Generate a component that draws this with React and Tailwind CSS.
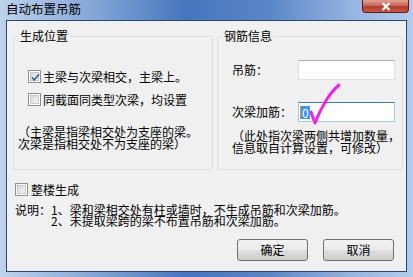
import React from 'react'

const CheckBox = ({ checked }) => (
  <div className="w-[13px] h-[13px] shrink-0 border border-[#8e8f8f] bg-white p-[1px]">
    <div className="relative w-full h-full border border-[#c9c9c9] bg-[linear-gradient(135deg,#d7d7d7,#f7f7f7)]">
      {checked && (
        <svg className="absolute left-[-1px] top-[-1px]" width="11" height="11" viewBox="0 0 11 11">
          <path d="M2 5.5 L4.3 8 L9 2.2" fill="none" stroke="#3f5c9f" strokeWidth="1.7" />
        </svg>
      )}
    </div>
  </div>
)

const WinButton = ({ children }) => (
  <div className="w-[71px] h-[22px] rounded-[3px] border border-[#707070] bg-[linear-gradient(180deg,#f2f2f2_0%,#ebebeb_48%,#dddddd_52%,#cfcfcf_100%)] flex items-center justify-center text-[12px] leading-[14px] text-black">
    {children}
  </div>
)

export default function App() {
  return (
    <div className="relative w-[413px] h-[277px] overflow-hidden bg-[linear-gradient(90deg,#bed3ec_0%,#7ea2d6_25%,#4576bd_45%,#5a86c6_65%,#95b4e0_85%,#b3cbec_100%)] font-['Noto_Sans_CJK_SC',sans-serif] text-black">
      {/* title bar */}
      <div className="flex items-start justify-between h-[20px]">
        <span className="ml-[6px] mt-[2px] text-[12.5px] leading-[14px]">自动布置吊筋</span>
        <div className="shrink-0 mr-[4px] w-[47px] h-[13px] rounded-b-[4px] border border-t-0 border-[#5e1c1c] bg-[linear-gradient(180deg,#e0a193_0%,#c96a5a_45%,#b23a2c_55%,#c45a48_100%)] flex items-center justify-center">
          <svg width="10" height="9" viewBox="0 0 10 9">
            <path d="M1.5 1 L8.5 8 M8.5 1 L1.5 8" stroke="#ffffff" strokeWidth="2.2" />
          </svg>
        </div>
      </div>

      {/* client area */}
      <div className="mx-[6px] h-[252px] border border-[#2b466c] bg-[#f0f0f0] text-[12px]">
        <div className="flex gap-[4px] pl-[6px] pt-[8px]">
          <fieldset className="w-[200px] h-[141px] rounded-[3px] border border-[#d5dfe5]">
            <legend className="ml-[4px] px-[2px] leading-[14px]">生成位置</legend>
            <div className="flex items-center gap-[2px] ml-[14px] mt-[27px] h-[13px] leading-[13px]">
              <CheckBox checked />
              <span>主梁与次梁相交，主梁上。</span>
            </div>
            <div className="flex items-center gap-[2px] ml-[14px] mt-[10px] h-[13px] leading-[13px]">
              <CheckBox />
              <span>同截面同类型次梁，均设置</span>
            </div>
            <div className="ml-[4px] mt-[20px] leading-[12px] whitespace-nowrap">
              <div>（主梁是指梁相交处为支座的梁。</div>
              <div>次梁是指相交处不为支座的梁）</div>
            </div>
          </fieldset>

          <fieldset className="w-[186px] h-[141px] rounded-[3px] border border-[#d5dfe5]">
            <legend className="ml-[4px] px-[2px] leading-[14px]">钢筋信息</legend>
            <div className="flex items-center ml-[14px] mt-[17px]">
              <span className="w-[66px] leading-[14px]">吊筋：</span>
              <div className="w-[97px] h-[20px] border border-[#dbdfe6] border-t-[#abadb3] bg-white" />
            </div>
            <div className="flex items-center ml-[14px] mt-[22px]">
              <span className="w-[66px] leading-[14px]">次梁加筋：</span>
              <div className="w-[97px] h-[20px] border border-[#a4c9e3] border-t-[#3d7bad] bg-white flex items-center pl-[1px]">
                <div className="w-[1px] h-[13px] bg-[#ff8a00]" />
                <div className="h-[13px] px-[1px] bg-[#3399ff] text-white leading-[13px]">0</div>
              </div>
            </div>
            <div className="ml-[14px] mt-[8px] leading-[12px] whitespace-nowrap">
              <div>（此处指次梁两侧共增加数量，</div>
              <div>信息取自计算设置，可修改）</div>
            </div>
          </fieldset>
        </div>

        <div className="flex items-center gap-[3px] ml-[8px] mt-[13px] h-[13px] leading-[13px]">
          <CheckBox />
          <span>整楼生成</span>
        </div>

        <div className="ml-[8px] mt-[8px] leading-[11px] whitespace-nowrap">
          <div>说明：1、梁和梁相交处有柱或墙时，不生成吊筋和次梁加筋。</div>
          <div className="ml-[36px]">2、未提取梁跨的梁不布置吊筋和次梁加筋。</div>
        </div>

        <div className="flex justify-end gap-[15px] pr-[12px] mt-[13px]">
          <WinButton>确定</WinButton>
          <WinButton>取消</WinButton>
        </div>
      </div>

      {/* hand-drawn mark over the dialog */}
      <svg className="absolute left-0 top-0 pointer-events-none" width="413" height="277" viewBox="0 0 413 277">
        <path d="M311 112 Q313 118 315 123 Q320 110 327 99 Q333 90 339 85" fill="none" stroke="#ee22ee" strokeWidth="3" strokeLinecap="round" strokeLinejoin="round" />
      </svg>
    </div>
  )
}
